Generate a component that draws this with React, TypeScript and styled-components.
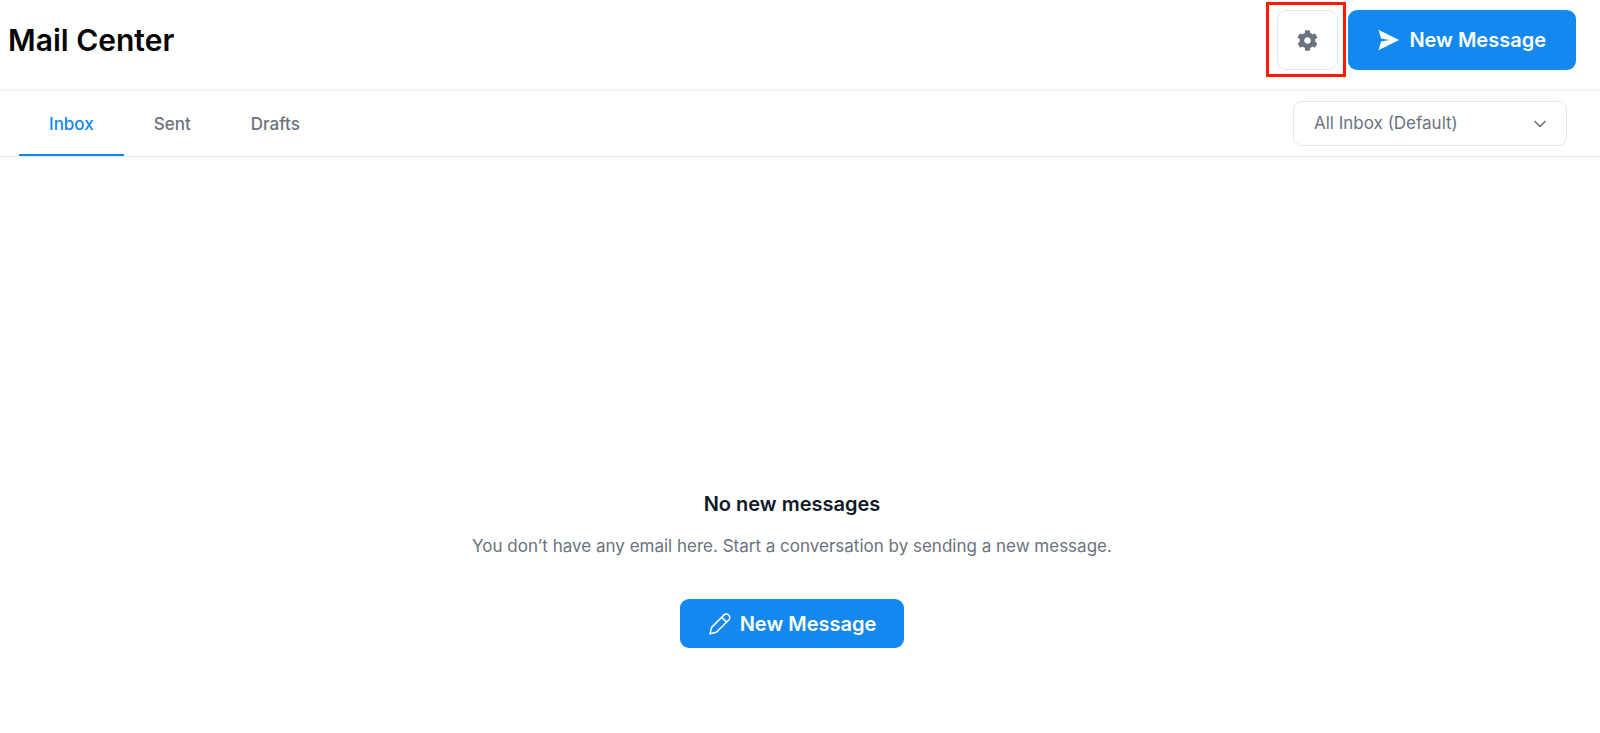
import React, { useState } from "react";
import styled, { createGlobalStyle } from "styled-components";
import { FaCog } from "react-icons/fa";
import { FiChevronDown } from "react-icons/fi";

const GlobalStyle = createGlobalStyle`
  *, *::before, *::after { box-sizing: border-box; }
  body {
    margin: 0;
    background: #fff;
    color: #6b7280;
    font-family: Inter, "Liberation Sans", sans-serif;
    font-size: 17px;
    line-height: 28px;
  }
  button, select { font: inherit; cursor: pointer; }
`;

const Page = styled.div`
  display: flex;
  flex-direction: column;
  min-height: 100vh;
`;

const Header = styled.header`
  display: flex;
  align-items: flex-start;
  justify-content: space-between;
  padding: 2px 24px 12px 8px;
  border-bottom: 2px solid #f3f4f6;
`;

const Title = styled.h1`
  margin: 20px 0 0;
  color: #050505;
  font-size: 30px;
  font-weight: 600;
  line-height: 36px;
`;

const Actions = styled.div`
  display: flex;
  align-items: flex-start;
  gap: 2px;
`;

const Highlight = styled.div`
  padding: 5px 5px 4px 8px;
  border: 3px solid #ff1a00;
`;

const IconButton = styled.button`
  display: grid;
  place-items: center;
  width: 61px;
  height: 60px;
  padding: 0;
  border: 1px solid #e5e7eb;
  border-radius: 10px;
  background: #fff;
  color: #6b7280;
`;

const PrimaryButton = styled.button<{ $large?: boolean }>`
  display: inline-flex;
  align-items: center;
  gap: ${(p) => (p.$large ? 10 : 8)}px;
  height: ${(p) => (p.$large ? 60 : 49)}px;
  margin-top: ${(p) => (p.$large ? 8 : 0)}px;
  padding: 0 ${(p) => (p.$large ? 30 : 28)}px;
  border: 0;
  border-radius: 9px;
  background: #1389ef;
  color: #fff;
  font-size: 20px;
  font-weight: 600;
`;

const Toolbar = styled.div`
  display: flex;
  align-items: center;
  justify-content: space-between;
  padding: 0 33px 0 19px;
  border-bottom: 1px solid #e5e7eb;
`;

const Tabs = styled.nav`
  display: flex;
`;

const Tab = styled.button<{ $active: boolean }>`
  height: 65px;
  padding: 2px 30px 0;
  border: 0;
  border-bottom: 2px solid ${(p) => (p.$active ? "#1389ef" : "transparent")};
  background: none;
  color: ${(p) => (p.$active ? "#1389ef" : "#6b7280")};
  font-weight: 500;
`;

const SelectBox = styled.div`
  display: grid;
  align-items: center;
  width: 274px;

  > * { grid-area: 1 / 1; }
  > svg { justify-self: end; margin-right: 17px; pointer-events: none; }
`;

const Select = styled.select`
  appearance: none;
  width: 100%;
  height: 45px;
  padding: 0 44px 2px 20px;
  border: 1px solid #e5e7eb;
  border-radius: 9px;
  background: #fff;
  color: #6b7280;
`;

const EmptyState = styled.main`
  display: flex;
  flex: 1;
  flex-direction: column;
  align-items: center;
  justify-content: flex-end;
  padding: 80px 16px 85px 0;
  text-align: center;
`;

const EmptyTitle = styled.h2`
  margin: 0;
  color: #111827;
  font-size: 20px;
  font-weight: 600;
  line-height: 28px;
`;

const EmptyText = styled.p`
  margin: 14px 0 39px;
`;

const SendIcon = () => (
  <svg width="21" height="22" viewBox="0 0 21 22" fill="currentColor" aria-hidden="true">
    <path d="M.4.8 21 11 .4 21.2 3.1 12.4 11.5 11 3.1 9.6Z" />
  </svg>
);

const PencilIcon = () => (
  <svg
    width="24"
    height="24"
    viewBox="0 0 24 24"
    fill="none"
    stroke="currentColor"
    strokeWidth="1.5"
    strokeLinejoin="round"
    aria-hidden="true"
  >
    <path d="M2 21.8 3.6 15.4 15.8 3.1A3.45 3.45 0 0 1 20.7 8L8.4 20.2ZM13.7 5.2 18.6 10.1" />
  </svg>
);

const tabs = ["Inbox", "Sent", "Drafts"];

export default function App() {
  const [active, setActive] = useState("Inbox");

  return (
    <Page>
      <GlobalStyle />
      <Header>
        <Title>Mail Center</Title>
        <Actions>
          <Highlight>
            <IconButton type="button" aria-label="Settings">
              <FaCog size={21} />
            </IconButton>
          </Highlight>
          <PrimaryButton type="button" $large>
            <SendIcon />
            New Message
          </PrimaryButton>
        </Actions>
      </Header>
      <Toolbar>
        <Tabs aria-label="Mail folders">
          {tabs.map((name) => (
            <Tab
              key={name}
              type="button"
              $active={name === active}
              aria-current={name === active ? "page" : undefined}
              onClick={() => setActive(name)}
            >
              {name}
            </Tab>
          ))}
        </Tabs>
        <SelectBox>
          <Select aria-label="Inbox filter">
            <option>All Inbox (Default)</option>
          </Select>
          <FiChevronDown size={20} aria-hidden="true" />
        </SelectBox>
      </Toolbar>
      <EmptyState>
        <EmptyTitle>No new messages</EmptyTitle>
        <EmptyText>
          You don’t have any email here. Start a conversation by sending a new message.
        </EmptyText>
        <PrimaryButton type="button">
          <PencilIcon />
          New Message
        </PrimaryButton>
      </EmptyState>
    </Page>
  );
}
